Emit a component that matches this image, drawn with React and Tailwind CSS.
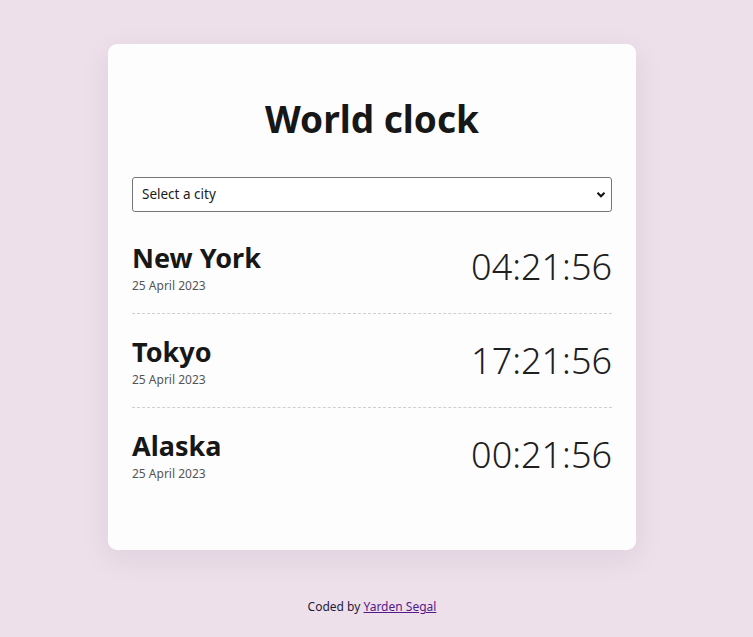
import React from "react";

const cities = [
  { name: "New York", date: "25 April 2023", time: "04:21:56" },
  { name: "Tokyo", date: "25 April 2023", time: "17:21:56" },
  { name: "Alaska", date: "25 April 2023", time: "00:21:56" },
];

export default function App() {
  return (
    <div className="min-h-screen bg-[#ede0ea] text-[#1a1a1a]" style={{ fontFamily: '"Noto Sans", "Open Sans", sans-serif' }}>
      <div className="w-[744px] pt-[44px]">
        <div className="mx-auto w-[528px] h-[506px] rounded-[9px] bg-[#fdfdfd] px-[24px] pt-[53px] shadow-[0_8px_30px_rgba(60,30,60,0.08)]">
          <h1 className="text-center text-[37px] font-bold leading-[44px] text-[#171717]">World clock</h1>
          <div className="relative mt-[36px] mb-[8px]">
            <select className="block h-[35px] w-full appearance-none rounded-[3px] border border-[#767676] bg-white pl-[9px] text-[13.5px] text-[#1a1a1a] outline-none">
              <option>Select a city</option>
            </select>
            <svg className="pointer-events-none absolute right-[6px] top-[14px]" width="10" height="8" viewBox="0 0 10 8">
              <path d="M1.5 1.8 L5 5.3 L8.5 1.8" fill="none" stroke="#111" strokeWidth="2" />
            </svg>
          </div>
          {cities.map((c, i) => (
            <div
              key={c.name}
              className={`flex h-[94px] justify-between ${i < 2 ? "border-b border-dashed border-[#cfcfcf]" : ""}`}
            >
              <div className="flex flex-col pt-[22px]">
                <div className="text-[27px] font-bold leading-[32px] text-[#171717]">{c.name}</div>
                <div className="mt-[4px] text-[12px] leading-[16px] text-[#555]">{c.date}</div>
              </div>
              <div className="self-center text-[36px] font-light leading-[44px] text-[#1f1f1f]">{c.time}</div>
            </div>
          ))}
        </div>
        <div className="mt-[48px] text-center text-[12px] text-[#1b1b3a]">
          Coded by <a href="#" className="text-[#551a8b] underline">Yarden Segal</a>
        </div>
      </div>
    </div>
  );
}
